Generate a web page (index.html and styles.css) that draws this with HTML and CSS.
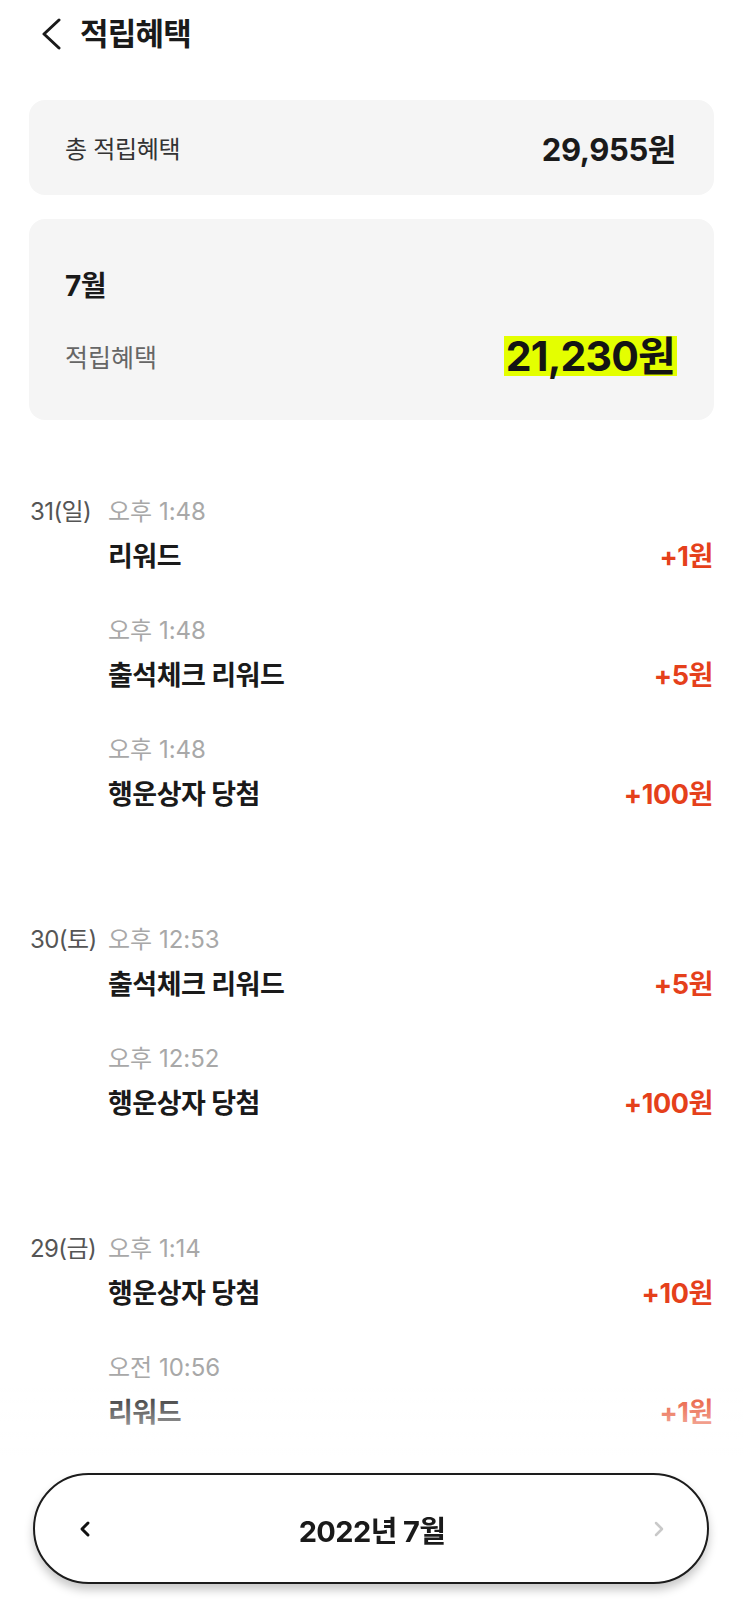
FILE: index.html
```html
<!DOCTYPE html>
<html lang="ko">
<head>
<meta charset="utf-8">
<title>적립혜택</title>
<link rel="stylesheet" href="styles.css">
</head>
<body>
<header class="topbar">
  <svg class="back" width="20" height="32" viewBox="0 0 20 32"><path d="M18 2 L3 16 L18 30" fill="none" stroke="#1a1a1a" stroke-width="3" stroke-linecap="round" stroke-linejoin="round"/></svg>
  <h1 class="title">적립혜택</h1>
</header>

<section class="cards">
  <div class="card card-total">
    <span class="label">총 적립혜택</span>
    <span class="total">29,955원</span>
  </div>
  <div class="card card-month">
    <div class="month">7월</div>
    <div class="month-row">
      <span class="label label-light">적립혜택</span>
      <span class="month-amt">21,230원</span>
    </div>
  </div>
</section>

<section class="history">
  <div class="group">
    <div class="date">31(일)</div>
    <div class="entries">
      <div class="entry">
        <div class="time">오후 1:48</div>
        <div class="row"><span class="name">리워드</span><span class="amt">+1원</span></div>
      </div>
      <div class="entry">
        <div class="time">오후 1:48</div>
        <div class="row"><span class="name">출석체크 리워드</span><span class="amt">+5원</span></div>
      </div>
      <div class="entry">
        <div class="time">오후 1:48</div>
        <div class="row"><span class="name">행운상자 당첨</span><span class="amt">+100원</span></div>
      </div>
    </div>
  </div>
  <div class="group">
    <div class="date">30(토)</div>
    <div class="entries">
      <div class="entry">
        <div class="time">오후 12:53</div>
        <div class="row"><span class="name">출석체크 리워드</span><span class="amt">+5원</span></div>
      </div>
      <div class="entry">
        <div class="time">오후 12:52</div>
        <div class="row"><span class="name">행운상자 당첨</span><span class="amt">+100원</span></div>
      </div>
    </div>
  </div>
  <div class="group">
    <div class="date">29(금)</div>
    <div class="entries">
      <div class="entry">
        <div class="time">오후 1:14</div>
        <div class="row"><span class="name">행운상자 당첨</span><span class="amt">+10원</span></div>
      </div>
      <div class="entry">
        <div class="time">오전 10:56</div>
        <div class="row"><span class="name">리워드</span><span class="amt">+1원</span></div>
      </div>
    </div>
  </div>
</section>

<div class="fade"></div>
<nav class="pager">
  <svg class="chev" width="12" height="18" viewBox="0 0 12 18"><path d="M9 3 L3 9 L9 15" fill="none" stroke="#111" stroke-width="3" stroke-linecap="round" stroke-linejoin="round"/></svg>
  <span class="pager-label">2022년 7월</span>
  <svg class="chev" width="12" height="18" viewBox="0 0 12 18"><path d="M3 3 L9 9 L3 15" fill="none" stroke="#c9c9c9" stroke-width="2.5" stroke-linecap="round" stroke-linejoin="round"/></svg>
</nav>
</body>
</html>
```
FILE: styles.css
```css
html, body {
  margin: 0;
  padding: 0;
  background: #ffffff;
}
body {
  font-family: Inter, "Noto Sans CJK KR", "Noto Sans", sans-serif;
  color: #1a1a1a;
  width: 743px;
  min-height: 1602px;
}
.topbar {
  display: flex;
  align-items: center;
  height: 68px;
  padding-left: 41px;
  gap: 19px;
}
.back { display: block; }
.title {
  margin: 0;
  font-size: 31px;
  font-weight: 700;
  letter-spacing: -0.8px;
  line-height: 36px;
  color: #1a1a1a;
}
.cards {
  padding: 32px 29px 0;
  display: flex;
  flex-direction: column;
  gap: 24px;
}
.card {
  background: #f5f5f5;
  border-radius: 16px;
  box-sizing: border-box;
}
.card-total {
  height: 95px;
  display: flex;
  align-items: center;
  justify-content: space-between;
  padding: 0 38px 0 36px;
}
.label {
  font-size: 24px;
  color: #333;
  letter-spacing: -0.3px;
}
.label-light { color: #666; letter-spacing: 0; font-size: 25px; }
.total {
  font-size: 31px;
  font-weight: 700;
  color: #1a1a1a;
  letter-spacing: -0.4px;
}
.card-month {
  height: 201px;
  padding: 52px 37px 0 36px;
}
.month {
  font-size: 28px;
  font-weight: 700;
  line-height: 30px;
  color: #1a1a1a;
  letter-spacing: -0.5px;
}
.month-row {
  margin-top: 35px;
  height: 40px;
  display: flex;
  align-items: center;
  justify-content: space-between;
}
.month-amt {
  font-size: 41px;
  font-weight: 700;
  line-height: 40px;
  height: 40px;
  display: inline-block;
  background: #e4ff00;
  padding: 0 2px;
  letter-spacing: -0.8px;
  color: #141414;
}
.history {
  padding: 77px 30px 140px;
  display: flex;
  flex-direction: column;
  gap: 113px;
}
.group {
  display: flex;
}
.date {
  width: 78px;
  flex: none;
  font-size: 24px;
  line-height: 30px;
  color: #555;
  letter-spacing: -0.6px;
}
.entries {
  flex: 1;
  display: flex;
  flex-direction: column;
  gap: 42px;
}
.time {
  font-size: 24px;
  line-height: 30px;
  color: #a8a8a8;
  letter-spacing: 0;
}
.row {
  margin-top: 13px;
  display: flex;
  justify-content: space-between;
  align-items: center;
  line-height: 34px;
}
.name {
  font-size: 27px;
  font-weight: 700;
  color: #1a1a1a;
  letter-spacing: -0.5px;
}
.amt {
  font-size: 27px;
  font-weight: 700;
  color: #e5401b;
  letter-spacing: -0.4px;
}
.fade {
  position: fixed;
  left: 0;
  right: 0;
  bottom: 0;
  height: 222px;
  background: linear-gradient(to bottom, rgba(255,255,255,0) 0px, rgba(255,255,255,0.4) 35px, #ffffff 85px);
  pointer-events: none;
}
.pager {
  position: fixed;
  left: 33px;
  right: 34px;
  bottom: 18px;
  height: 111px;
  box-sizing: border-box;
  border: 2px solid #1c1c1c;
  border-radius: 56px;
  background: #ffffff;
  box-shadow: 0 6px 10px rgba(0,0,0,0.22);
  display: flex;
  align-items: center;
  justify-content: space-between;
  padding: 0 42px 0 44px;
}
.chev { display: block; }
.pager-label {
  font-size: 29px;
  font-weight: 700;
  color: #1a1a1a;
  letter-spacing: -0.6px;
}
```
